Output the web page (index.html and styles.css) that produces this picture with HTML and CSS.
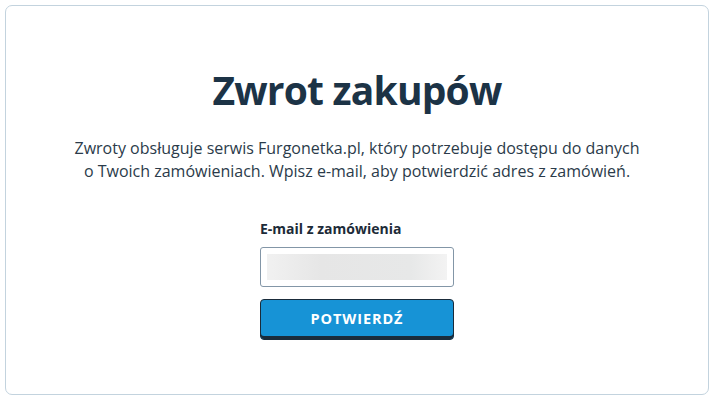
FILE: index.html
```html
<!DOCTYPE html>
<html lang="pl">
<head>
<meta charset="utf-8">
<title>Zwrot zakupów</title>
<link rel="stylesheet" href="styles.css">
</head>
<body>
<main class="card">
  <h1 class="title">Zwrot zakupów</h1>
  <p class="lead">Zwroty obsługuje serwis Furgonetka.pl, który potrzebuje dostępu do danych<br>o Twoich zamówieniach. Wpisz e-mail, aby potwierdzić adres z zamówień.</p>
  <form class="form">
    <label class="label" for="email">E-mail z zamówienia</label>
    <div class="input">
      <span class="blur"></span>
    </div>
    <button type="button" class="btn">POTWIERDŹ</button>
  </form>
</main>
</body>
</html>
```
FILE: styles.css
```css
* { box-sizing: border-box; }
html, body { margin: 0; padding: 0; background: #fff; }
body { padding: 5px 6px 7px 5px; font-family: "Open Sans", sans-serif; }
.card {
  height: 390px;
  border: 1px solid #c3d3de;
  border-radius: 7px;
  display: flex;
  flex-direction: column;
  align-items: center;
  padding-top: 56px;
}
.title {
  margin: 0;
  font-family: "Open Sans", sans-serif;
  font-weight: 700;
  font-size: 39px;
  line-height: 56px;
  color: #1c3346;
  letter-spacing: -0.8px;
}
.lead {
  margin: 19px 0 0;
  text-align: center;
  font-size: 16px;
  line-height: 23px;
  color: #2b3b4a;
}
.form {
  margin-top: 36px;
  width: 194px;
  display: flex;
  flex-direction: column;
}
.label {
  font-size: 14px;
  font-weight: 700;
  color: #1c2b38;
  line-height: 20px;
}
.input {
  margin-top: 8px;
  height: 40px;
  border: 1px solid #8396a7;
  border-radius: 3px;
  padding: 6px 6px 6px 6px;
}
.blur {
  display: block;
  height: 26px;
  background: linear-gradient(90deg, #f1f1f1 0%, #e6e6e6 30%, #e7e8e8 80%, #f3f3f3 100%);
}
.btn {
  margin-top: 12px;
  height: 41px;
  border: 1px solid #1a2b3a;
  border-radius: 4px;
  background: #1793d6;
  box-shadow: inset 0 -3px 0 #1a2b3a;
  color: #fff;
  font-family: "Open Sans", sans-serif;
  font-weight: 700;
  font-size: 14.5px;
  letter-spacing: 0.9px;
  padding: 0 0 2px;
}
```
